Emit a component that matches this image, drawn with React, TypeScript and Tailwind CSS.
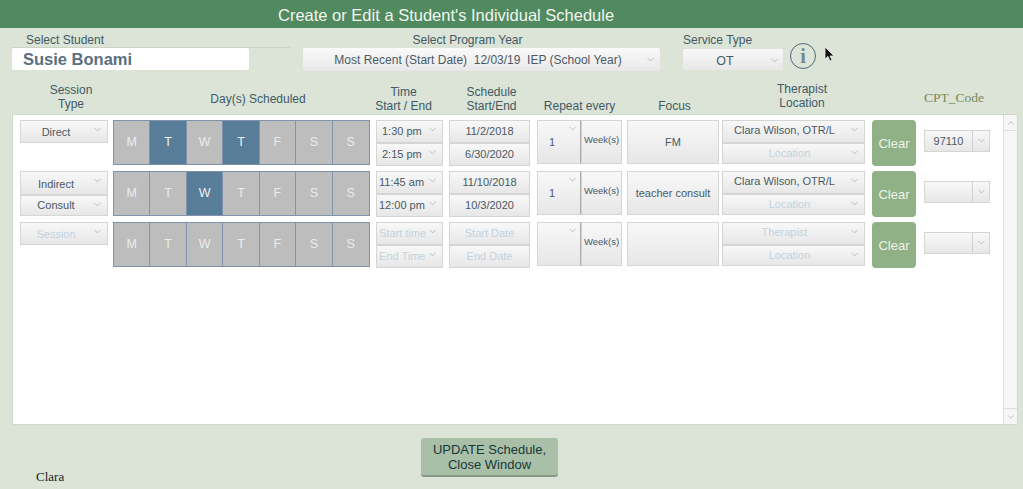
import { ChevronDown, ChevronUp } from "lucide-react"

const days = ["M", "T", "W", "T", "F", "S", "S"]
const dim = "text-[#c3d3de]"
const face = "border border-[#d4d6d4] bg-linear-to-b from-[#f8f8f8] to-[#e7e7e7]"

function Chevron({ className = "top-[3px] right-[4px]" }: { className?: string }) {
  return <ChevronDown className={`absolute h-[11px] w-[11px] text-[#a3a8a8] ${className}`} strokeWidth={1.5} />
}

function Field({ label, arrow = true, muted = false, align = "justify-center pr-[8px]" }: { label: string; arrow?: boolean; muted?: boolean; align?: string }) {
  return (
    <div className={`relative flex h-[23px] flex-1 items-center text-[11px] ${face} ${align} ${muted ? dim : "text-[#4a5a66]"}`}>
      {label}
      {arrow && <Chevron />}
    </div>
  )
}

function Days({ on }: { on: number[] }) {
  return (
    <div className="ml-[5px] grid h-[45px] w-[257px] grid-cols-7 border border-[#7f93ad] bg-[#bdbdbd]">
      {days.map((d, i) => (
        <div
          key={i}
          className={`flex items-center justify-center border-r border-[#7f93ad] text-[12.5px] last:border-r-0 ${
            on.includes(i) ? "bg-[#587d99] text-[#f2f2f2]" : "text-[#ececec]"
          }`}
        >
          {d}
        </div>
      ))}
    </div>
  )
}

type RowProps = {
  session: string[]
  on: number[]
  times: string[]
  dates: string[]
  repeat: string
  focus: string
  therapist: string
  cpt: string
  empty?: boolean
}

function Row({ session, on, times, dates, repeat, focus, therapist, cpt, empty = false }: RowProps) {
  return (
    <div className="flex h-[46px] items-start">
      <div className="ml-[7px] flex w-[88px] flex-col">
        {session.length === 2 && !empty ? (
          <div className="flex h-[45px] flex-col">
            <Field label={session[0]} align="justify-center pr-[16px] pt-[3px]" />
            <Field label={session[1]} align="justify-center pr-[16px]" />
          </div>
        ) : (
          // the placeholder is too long for its box, so "Type" gets cut off at the bottom
          <div className={`relative h-[23px] overflow-hidden pt-[4px] pr-[16px] text-center text-[11px] leading-[14px] ${face} ${empty ? dim : "text-[#4a5a66]"}`}>
            {session.map((s) => (
              <div key={s}>{s}</div>
            ))}
            <Chevron />
          </div>
        )}
      </div>
      <Days on={on} />
      <div className="ml-[6px] flex h-[46px] w-[67px] flex-col">
        {times.map((t) => (
          <Field key={t} label={t} muted={empty} align={t.length > 7 ? "pl-[2px]" : "pl-[5px]"} />
        ))}
      </div>
      <div className="ml-[6px] flex h-[46px] w-[81px] flex-col">
        <Field label={dates[0]} muted={empty} arrow={false} align="justify-center" />
        <Field label={dates[1]} muted={empty} arrow={false} align="justify-center" />
      </div>
      <div className="ml-[7px] flex h-[44px] w-[85px]">
        <div className={`relative flex w-[44px] items-center border-r-[#a9abab] pl-[11px] text-[11px] text-[#4a5a66] ${face}`}>
          {repeat}
          <Chevron className="top-[2px] right-[2px]" />
        </div>
        <div className={`flex flex-1 items-center justify-center pb-[3px] text-[9.5px] text-[#4a5a66] ${face}`}>Week(s)</div>
      </div>
      <div className={`ml-[5px] flex h-[44px] w-[92px] items-center justify-center text-[11px] text-[#4a5a66] ${face}`}>{focus}</div>
      <div className="ml-[3px] flex h-[44px] w-[143px] flex-col">
        <Field label={therapist} muted={empty} align="justify-center pr-[18px] pb-[2px]" />
        <Field label="Location" muted />
      </div>
      <button className="ml-[7px] h-[46px] w-[44px] rounded-[4px] bg-[#8fb185] pt-[2px] text-[13px] text-[#eef2ea]">Clear</button>
      <div className={`ml-[8px] mt-[10px] flex h-[22px] w-[66px] text-[11px] text-[#4a5a66] ${face}`}>
        <div className="flex flex-1 items-center justify-center border-r border-[#cfcfcf]">{cpt}</div>
        <div className="relative w-[16px]">
          <Chevron className="top-[4px] right-[2px]" />
        </div>
      </div>
    </div>
  )
}

function Head({ className, lines }: { className: string; lines: string[] }) {
  return (
    <div className={`flex shrink-0 flex-col items-center text-[12px] leading-[14px] whitespace-nowrap text-[#3f5a66] ${className}`}>
      {lines.map((l) => (
        <span key={l}>{l}</span>
      ))}
    </div>
  )
}

export default function App() {
  return (
    <div className="relative flex h-[489px] w-[1023px] flex-col overflow-hidden bg-[#dbe4d6] font-['Liberation_Sans',Arial,sans-serif]">
      <div className="flex h-[28px] shrink-0 items-center bg-[#528a60] pt-[3px] pl-[278px] text-[16.5px] text-[#f1f5ef]">
        Create or Edit a Student's Individual Schedule
      </div>

      <div className="flex h-[54px] shrink-0 pl-[12px]">
        <div className="w-[278px]">
          <div className="h-[19px] pt-[5px] pl-[14px] text-[12px] leading-[14px] text-[#3f5a66]">Select Student</div>
          <div className="border-t border-[#cbd3c7]">
            <div className="flex h-[22px] w-[237px] items-center rounded-[2px] bg-white pl-[11px] text-[16.5px] font-bold text-[#5a6f80]">
              Susie Bonami
            </div>
          </div>
        </div>
        <div className="ml-[13px] w-[357px]">
          <div className="h-[20px] pt-[5px] pr-[28px] text-center text-[12px] leading-[14px] text-[#3f5a66]">Select Program Year</div>
          <div className="relative flex h-[23px] items-center justify-center rounded-[2px] bg-linear-to-b from-[#fafafa] to-[#e8e8e8] pr-[7px] text-[12px] text-[#4a5a66]">
            Most Recent (Start Date)&nbsp; 12/03/19&nbsp; IEP (School Year)
            <Chevron className="top-[6px] right-[4px]" />
          </div>
        </div>
        <div className="ml-[23px] w-[100px]">
          <div className="h-[21px] pt-[5px] text-[12px] leading-[14px] text-[#3f5a66]">Service Type</div>
          <div className="relative flex h-[21px] items-center justify-center rounded-[2px] bg-linear-to-b from-[#f8f8f8] to-[#e8e8e8] pt-[4px] pr-[16px] text-[12.5px] text-[#4a5a66]">
            OT
            <Chevron className="top-[6px] right-[3px]" />
          </div>
        </div>
        <div className="ml-[7px] mt-[15px] flex h-[26px] w-[26px] items-center justify-center rounded-full border border-[#4f6a78] font-['Liberation_Serif',serif] text-[20px] leading-none font-bold text-[#6f8694]">
          i
        </div>
      </div>

      <div className="flex h-[32px] shrink-0 items-end pb-[1px] pl-[12px]">
        <Head className="ml-[11px] w-[96px] pb-[2px]" lines={["Session", "Type"]} />
        <Head className="ml-[29px] w-[220px] pb-[7px]" lines={["Day(s) Scheduled"]} />
        <Head className="ml-[2px] w-[67px]" lines={["Time", "Start / End"]} />
        <Head className="ml-[14px] w-[81px]" lines={["Schedule", "Start/End"]} />
        <Head className="ml-[5px] w-[85px]" lines={["Repeat every"]} />
        <Head className="ml-[6px] w-[93px]" lines={["Focus"]} />
        <Head className="ml-[9px] w-[144px] pb-[3px]" lines={["Therapist", "Location"]} />
        <div className="ml-[47px] w-[66px] pb-[8px] text-center font-['Liberation_Serif',serif] text-[13.5px] leading-[14px] whitespace-nowrap text-[#7a8a58]">
          CPT_Code
        </div>
      </div>

      <div className="mr-[5px] ml-[12px] flex h-[311px] shrink-0 border border-[#d2d8ce] bg-white">
        <div className="flex flex-1 flex-col gap-[5px] pt-[5px]">
          <Row session={["Direct"]} on={[1, 3]} times={["1:30 pm", "2:15 pm"]} dates={["11/2/2018", "6/30/2020"]} repeat="1" focus="FM" therapist="Clara Wilson, OTR/L" cpt="97110" />
          <Row session={["Indirect", "Consult"]} on={[2]} times={["11:45 am", "12:00 pm"]} dates={["11/10/2018", "10/3/2020"]} repeat="1" focus="teacher consult" therapist="Clara Wilson, OTR/L" cpt="" />
          <Row session={["Session", "Type"]} on={[]} times={["Start time", "End Time"]} dates={["Start Date", "End Date"]} repeat="" focus="" therapist="Therapist" cpt="" empty />
        </div>
        <div className="flex w-[14px] flex-col justify-between border-l border-[#dedede] bg-[#f6f6f6]">
          <div className="flex h-[16px] items-center justify-center border-b border-[#dedede]">
            <ChevronUp className="h-[10px] w-[10px] text-[#9a9a9a]" strokeWidth={1.5} />
          </div>
          <div className="flex h-[16px] items-center justify-center border-t border-[#dedede]">
            <ChevronDown className="h-[10px] w-[10px] text-[#9a9a9a]" strokeWidth={1.5} />
          </div>
        </div>
      </div>

      <div className="flex flex-1 items-start pt-[13px] pl-[36px]">
        <div className="mt-[31px] w-[385px] font-['Liberation_Serif',serif] text-[13px] leading-[15px] text-[#222]">Clara</div>
        <button className="flex h-[39px] w-[137px] flex-col items-center justify-center rounded-[3px] border-b-2 border-[#87998a] bg-[#a9bfa8] text-[13px] leading-[15px] text-[#163838]">
          <span>UPDATE Schedule,</span>
          <span>Close Window</span>
        </button>
      </div>

      {/* mouse pointer */}
      <svg className="absolute top-[46px] left-[824px]" width="12" height="17" viewBox="0 0 12 17">
        <path d="M1 1 L1 13 L4 10.5 L6 15 L8 14 L6 10 L10 10 Z" fill="#111" stroke="#eee" strokeWidth="0.8" />
      </svg>
    </div>
  )
}
